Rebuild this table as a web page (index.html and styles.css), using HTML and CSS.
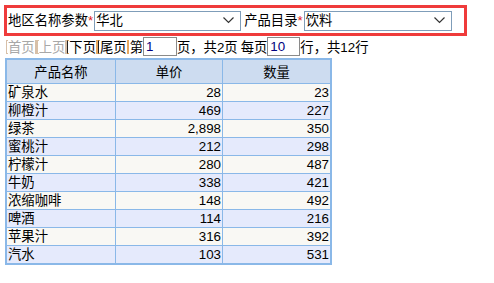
FILE: index.html
```html
<!DOCTYPE html>
<html lang="zh">
<head>
<meta charset="utf-8">
<link rel="stylesheet" href="styles.css">
</head>
<body>
<div class="params">
  <span class="label">地区名称参数<span class="req">*</span></span>
  <div class="sel sel1"><span class="val">华北</span><svg class="chev" width="11" height="7" viewBox="0 0 11 7"><path d="M0.5 0.5 L5.5 5.5 L10.5 0.5" fill="none" stroke="#333" stroke-width="1.2"/></svg></div>
  <span class="label label2">产品目录<span class="req">*</span></span>
  <div class="sel sel2"><span class="val">饮料</span><svg class="chev" width="11" height="7" viewBox="0 0 11 7"><path d="M0.5 0.5 L5.5 5.5 L10.5 0.5" fill="none" stroke="#333" stroke-width="1.2"/></svg></div>
</div>
<div class="pager">
  <span class="nav off"><i class="bl"></i>首页<i class="br"></i></span><span class="nav off"><i class="bl"></i>上页<i class="br"></i></span><span class="nav"><i class="bl"></i>下页<i class="br"></i></span><span class="nav"><i class="bl"></i>尾页<i class="br"></i></span>
  <span class="txt first">第</span><span class="box">1</span><span class="txt">页，共2页</span><span class="txt gap">每页</span><span class="box box2">10</span><span class="txt">行，共12行</span>
</div>
<table class="grid">
  <thead><tr><th>产品名称</th><th>单价</th><th>数量</th></tr></thead>
  <tbody>
    <tr><td>矿泉水</td><td class="n">28</td><td class="n">23</td></tr>
    <tr><td>柳橙汁</td><td class="n">469</td><td class="n">227</td></tr>
    <tr><td>绿茶</td><td class="n">2,898</td><td class="n">350</td></tr>
    <tr><td>蜜桃汁</td><td class="n">212</td><td class="n">298</td></tr>
    <tr><td>柠檬汁</td><td class="n">280</td><td class="n">487</td></tr>
    <tr><td>牛奶</td><td class="n">338</td><td class="n">421</td></tr>
    <tr><td>浓缩咖啡</td><td class="n">148</td><td class="n">492</td></tr>
    <tr><td>啤酒</td><td class="n">114</td><td class="n">216</td></tr>
    <tr><td>苹果汁</td><td class="n">316</td><td class="n">392</td></tr>
    <tr><td>汽水</td><td class="n">103</td><td class="n">531</td></tr>
  </tbody>
</table>
</body>
</html>
```
FILE: styles.css
```css
html, body {
  margin: 0;
  padding: 0;
  background: #ffffff;
}
body {
  font-family: "Liberation Sans", "Noto Sans CJK SC", sans-serif;
  font-size: 13.33px;
  color: #000;
}
.params {
  margin: 5px 0 0 4px;
  width: 456px;
  height: 25px;
  border: 3px solid #ef3b3b;
  display: flex;
  align-items: center;
  padding-left: 1px;
}
.label {
  white-space: nowrap;
  line-height: 20px;
}
.req {
  color: #e02020;
}
.label2 {
  margin-left: 3px;
  margin-right: 1px;
}
.sel {
  box-sizing: border-box;
  height: 20px;
  border: 1px solid #7f9db9;
  display: flex;
  align-items: center;
  justify-content: space-between;
  padding: 0 6px 0 1px;
  background: #fff;
}
.sel1 {
  width: 147px;
  margin-left: 1px;
}
.sel2 {
  width: 148px;
}
.val {
  line-height: 18px;
}
.chev {
  display: block;
}
.pager {
  display: flex;
  align-items: center;
  height: 19px;
  margin: 1px 0 0 6px;
  white-space: nowrap;
}
.nav {
  display: inline-flex;
  align-items: center;
}
.nav i {
  display: inline-block;
  box-sizing: border-box;
  width: 2px;
  height: 14px;
  border: 1px solid #e8a860;
}
.nav .bl {
  border-right: 0;
  border-left-color: #222;
}
.nav .br {
  border-left: 0;
  border-right-width: 2px;
}
.nav.off {
  color: #a8a8a8;
}
.nav.off i {
  border-color: #d8c0a8;
}
.first {
  margin-left: 1px;
}
.gap {
  margin-left: 3px;
}
.box {
  box-sizing: border-box;
  width: 34px;
  height: 19px;
  border: 1px solid #8a8a8a;
  padding-left: 2px;
  line-height: 17px;
  color: #000080;
}
.box2 {
  width: 33px;
}
.grid {
  margin: 2px 0 0 5px;
  border-collapse: collapse;
  border: 2px solid #8ab8e8;
}
.grid th, .grid td {
  border: 1px solid #8ab8e8;
  padding: 0 2px;
  white-space: nowrap;
}
.grid th {
  background: #cddcf0;
  font-weight: normal;
  height: 23px;
  text-align: center;
}
.grid th:nth-child(1), .grid td:nth-child(1) { width: 104px; }
.grid th:nth-child(2), .grid td:nth-child(2) { width: 102px; }
.grid th:nth-child(3), .grid td:nth-child(3) { width: 103px; }
.grid td {
  height: 17px;
  line-height: 17px;
  padding: 0 1px;
}
.grid td.n {
  text-align: right;
}
.grid tbody tr:nth-child(odd) td {
  background: #f9f8f4;
}
.grid tbody tr:nth-child(even) td {
  background: #e5eafc;
}
```
